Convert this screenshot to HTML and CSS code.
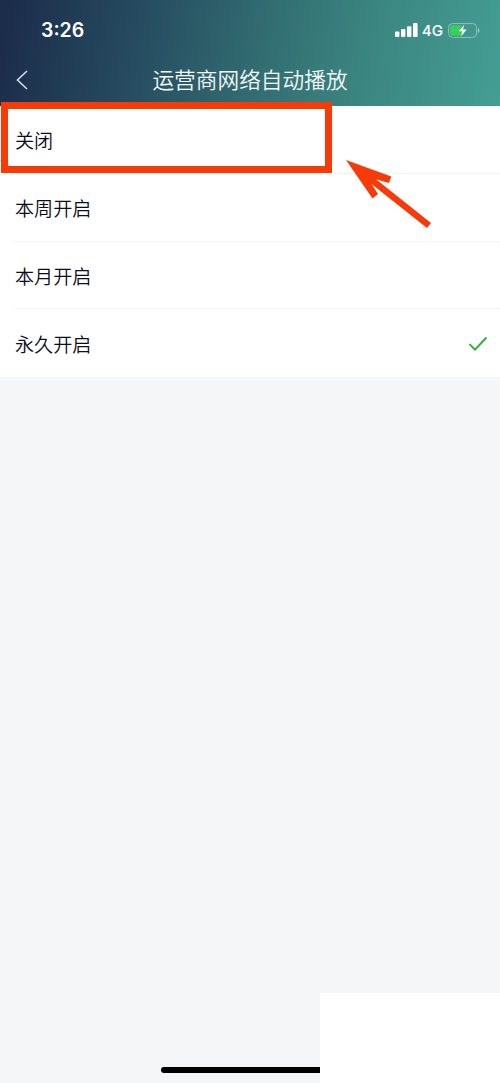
FILE: index.html
```html
<!DOCTYPE html>
<html lang="zh-CN">
<head>
<meta charset="utf-8">
<title>运营商网络自动播放</title>
<link rel="stylesheet" href="styles.css">
</head>
<body>
<div class="screen">
  <header class="header">
    <div class="status">
      <span class="time">3:26</span>
      <div class="indicators">
        <svg class="signal" width="23" height="14" viewBox="0 0 23 14" fill="#fff">
          <rect x="0" y="8.5" width="4.4" height="5.5" rx="1"/>
          <rect x="6" y="6" width="4.4" height="8" rx="1"/>
          <rect x="12" y="3.2" width="4.4" height="10.8" rx="1"/>
          <rect x="18" y="0" width="4.6" height="14" rx="1"/>
        </svg>
        <span class="network">4G</span>
        <svg class="battery" width="32" height="15" viewBox="0 0 32 15">
          <rect x="0.6" y="0.6" width="28" height="13.8" rx="3.8" fill="none" stroke="#8fc3be" stroke-width="1"/>
          <path d="M4.2 2.2H14l-3 6h3l-.7 4.6H4.2a2 2 0 0 1-2-2V4.200a2 2 0 0 1 2-2z" fill="#36d05a"/>
          <path d="M16.200 1.700L10.700 8.200h3.600l-1.300 5.300 5.700-7h-3.700z" fill="#fff"/>
          <path d="M30 5.200c1.800.6 1.800 4 0 4.600z" fill="#a3cfca"/>
        </svg>
      </div>
    </div>
    <nav class="navbar">
      <svg class="back" width="14" height="22" viewBox="0 0 14 22"><path d="M12 2L2.500 11L12 20" fill="none" stroke="#d5dce5" stroke-width="1.600"/></svg>
      <h1 class="title">运营商网络自动播放</h1>
    </nav>
  </header>
  <ul class="options">
    <li class="option">关闭</li>
    <li class="option">本周开启</li>
    <li class="option">本月开启</li>
    <li class="option">永久开启
      <svg width="20" height="16" viewBox="0 0 20 16"><path d="M1.500 8.200L7 13.700L18.500 1.500" fill="none" stroke="#2bb12f" stroke-width="1.900"/></svg>
    </li>
  </ul>
  <div class="highlight"></div>
  <svg class="arrow" width="90" height="72" viewBox="0 0 90 72" fill="#f63b09"><path d="M1 1L46.300 17.500L44 24L31 20.300L86 64L82 69L26.500 25L33 35L27.500 39.500Z"/></svg>
  <div class="home-indicator"></div>
  <div class="cover"></div>
</div>
</body>
</html>
```
FILE: styles.css
```css
body {
  margin: 0;
  font-family: "Noto Sans CJK SC", sans-serif;
}

.screen {
  position: relative;
  height: 1083px;
  overflow: hidden;
  background: #f4f6f8;
}

.header {
  height: 106px;
  background: linear-gradient(100deg, #1c2d4b 2%, #264b60 27%, #316a70 50%, #3b8580 72%, #449e94 100%);
  color: #fff;
}

.status {
  display: flex;
  justify-content: space-between;
  align-items: center;
  height: 60px;
  padding: 0 20px 0 41px;
  box-sizing: border-box;
  font-family: Inter, sans-serif;
}

.time {
  font-size: 19.5px;
  font-weight: 600;
}

.indicators {
  display: flex;
  align-items: center;
}

.network {
  margin: 0 5px 0 4px;
  font-size: 15.2px;
  font-weight: 500;
}

.navbar {
  display: grid;
  grid-template-columns: 28px 1fr 28px;
  align-items: center;
  height: 40px;
  padding: 0 15px;
}

.title {
  margin: 0;
  text-align: center;
  font-size: 21.7px;
  font-weight: 350;
  line-height: 38px;
  padding-bottom: 2px;
  color: #f3f8f9;
}

.options {
  margin: 0;
  padding: 0 0 0 14px;
  list-style: none;
  background: #fff;
}

.option {
  display: flex;
  justify-content: space-between;
  align-items: center;
  height: 67.75px;
  padding: 2px 12px 0 1px;
  box-sizing: border-box;
  border-bottom: 1px solid #f3f3f5;
  font-size: 19.1px;
  font-weight: 350;
  color: #0c0c20;
}

.option:last-child {
  border-bottom: 0;
  padding-top: 1px;
}

.highlight {
  position: absolute;
  left: 1px;
  top: 102px;
  width: 331px;
  height: 71px;
  box-sizing: border-box;
  border: 7px solid #f63b09;
}

.arrow {
  position: absolute;
  left: 345px;
  top: 159px;
}

.home-indicator {
  position: absolute;
  left: 161px;
  top: 1067px;
  width: 178px;
  height: 6px;
  border-radius: 3px;
  background: #000;
}

.cover {
  position: absolute;
  right: 0;
  bottom: 0;
  width: 180px;
  height: 90px;
  background: #fff;
}
```
